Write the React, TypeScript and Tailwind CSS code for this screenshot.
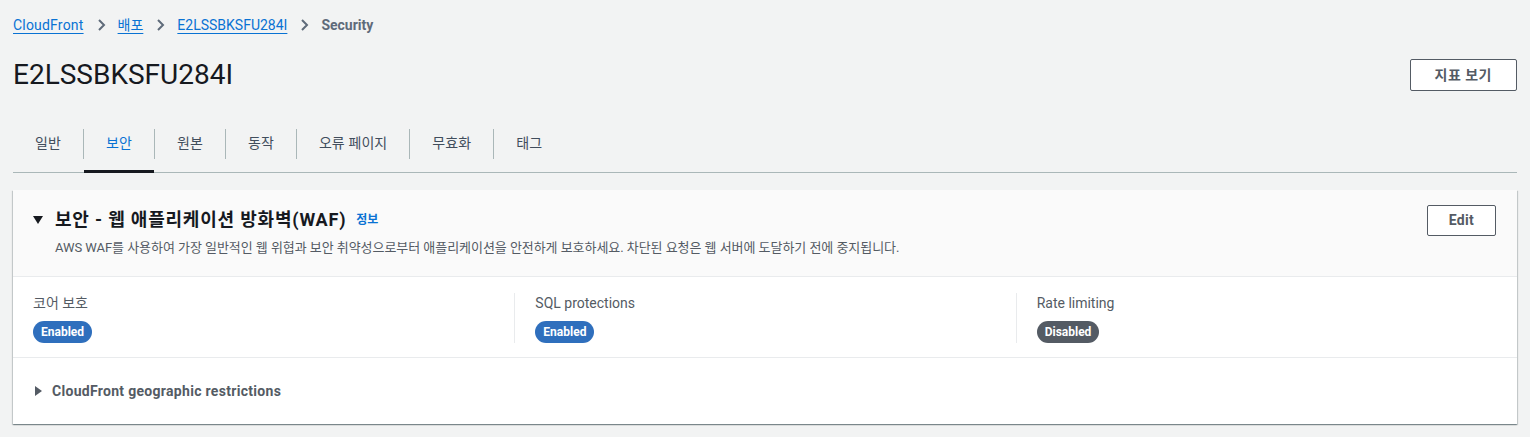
const tabs = ["일반", "보안", "원본", "동작", "오류 페이지", "무효화", "태그"];

function Chevron() {
  return (
    <svg width="16" height="16" viewBox="0 0 16 16" className="mx-[9px]">
      <path d="M6 3l5 5-5 5" fill="none" stroke="#5f6b7a" strokeWidth="2" />
    </svg>
  );
}

function Badge({ label, on }: { label: string; on: boolean }) {
  return (
    <span
      className={
        "inline-block rounded-full px-[8px] text-[12px] leading-[22px] font-bold text-white " +
        (on ? "bg-[#2f6fbd]" : "bg-[#545b64]")
      }
    >
      {label}
    </span>
  );
}

export default function App() {
  return (
    <div className="min-h-screen bg-[#f2f3f3] px-[13px] pt-[15px] font-['Roboto','Noto_Sans_CJK_KR',sans-serif] text-[#16191f]">
      {/* breadcrumb */}
      <nav className="flex items-center text-[14px] leading-[20px]">
        <a className="text-[#0972d3] underline underline-offset-[3px] tracking-[0.2px]">CloudFront</a>
        <Chevron />
        <a className="text-[#0972d3] underline underline-offset-[3px]">배포</a>
        <Chevron />
        <a className="text-[#0972d3] underline underline-offset-[3px]">E2LSSBKSFU284I</a>
        <Chevron />
        <span className="font-bold text-[#5f6b7a]">Security</span>
      </nav>

      <div className="mt-[22px] flex items-center justify-between">
        <h1 className="text-[28px] leading-[36px] font-normal">E2LSSBKSFU284I</h1>
        <button className="h-[32px] rounded-[2px] border border-[#545b64] bg-white px-[24px] text-[14px] font-bold tracking-[0.5px] text-[#545b64]">
          지표 보기
        </button>
      </div>

      {/* tabs */}
      <div className="mt-[35px] flex items-start border-b border-[#aab7b8]">
        {tabs.map((t, i) => (
          <div key={t} className="flex items-start">
            {i > 0 && <div className="mt-[1px] h-[30px] w-px bg-[#aab7b8]" />}
            <div
              className={
                "-mb-px h-[45px] border-b-[3px] px-[22px] pt-[5px] text-[14px] leading-[20px] tracking-[0.1px] " +
                (t === "보안" ? "border-[#16191f] text-[#0972d3]" : "border-transparent text-[#414d5c]")
              }
            >
              {t}
            </div>
          </div>
        ))}
      </div>

      {/* card */}
      <div className="mt-[17px] bg-white shadow-[0_1px_1px_0_rgba(0,28,36,0.3),1px_1px_1px_0_rgba(0,28,36,0.15),-1px_1px_1px_0_rgba(0,28,36,0.15)]">
        <div className="flex items-start justify-between border-b border-[#e9ebed] bg-[#fafafa] pl-[20px] pr-[21px] pt-[15px] pb-[20px]">
          <div>
            <div className="flex items-center pt-[4px]">
              <svg width="10" height="8" viewBox="0 0 10 8" className="mr-[12px]">
                <polygon points="0,0 10,0 5,8" fill="#16191f" />
              </svg>
              <h2 className="text-[18px] leading-[22px] font-bold tracking-[0.8px]">보안 - 웹 애플리케이션 방화벽(WAF)</h2>
              <a className="ml-[10px] text-[12px] font-bold text-[#0972d3]">정보</a>
            </div>
            <p className="mt-[8px] pl-[22px] text-[13px] leading-[17px] tracking-[-0.05px] text-[#545b64]">
              AWS WAF를 사용하여 가장 일반적인 웹 위협과 보안 취약성으로부터 애플리케이션을 안전하게 보호하세요. 차단된 요청은 웹 서버에 도달하기 전에 중지됩니다.
            </p>
          </div>
          <button className="h-[31px] rounded-[2px] border border-[#545b64] bg-white px-[21px] text-[14px] font-bold tracking-[0.3px] text-[#545b64]">
            Edit
          </button>
        </div>

        <div className="grid grid-cols-3 gap-x-[40px] border-b border-[#e9ebed] px-[20px] pt-[16px] pb-[14px]">
          <div>
            <div className="text-[14px] leading-[20px] text-[#545b64]">코어 보호</div>
            <div className="mt-[6px]">
              <Badge label="Enabled" on />
            </div>
          </div>
          <div className="-ml-[20px] border-l border-[#e9ebed] pl-[20px]">
            <div className="text-[14px] leading-[20px] text-[#545b64]">SQL protections</div>
            <div className="mt-[6px]">
              <Badge label="Enabled" on />
            </div>
          </div>
          <div className="-ml-[20px] border-l border-[#e9ebed] pl-[20px]">
            <div className="text-[14px] leading-[20px] text-[#545b64]">Rate limiting</div>
            <div className="mt-[6px]">
              <Badge label="Disabled" on={false} />
            </div>
          </div>
        </div>

        <div className="flex items-center px-[22px] py-[23px]">
          <svg width="7" height="10" viewBox="0 0 7 10" className="mr-[10px]">
            <polygon points="0,0 7,5 0,10" fill="#545b64" />
          </svg>
          <span className="text-[14px] leading-[20px] font-bold tracking-[0.3px] text-[#545b64]">CloudFront geographic restrictions</span>
        </div>
      </div>
    </div>
  );
}
